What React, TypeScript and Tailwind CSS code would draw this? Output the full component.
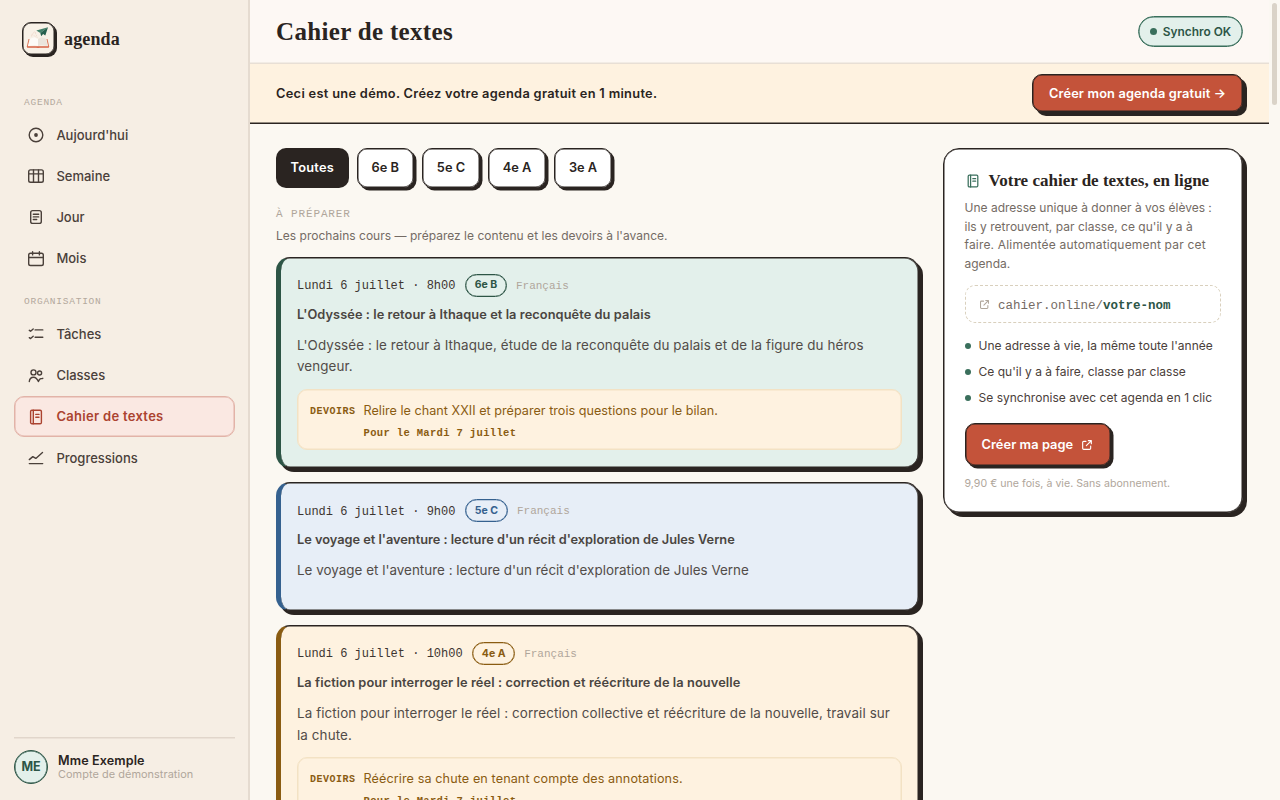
import type { ReactNode } from "react";

const SANS = "font-['Inter',sans-serif]";
const SERIF = "font-['Liberation_Serif',serif]";
const MONO = "font-['Liberation_Mono',monospace]";

function Icon({ children, className = "size-[18px]" }: { children: ReactNode; className?: string }) {
  return (
    <svg
      viewBox="0 0 18 18"
      className={`shrink-0 ${className}`}
      fill="none"
      stroke="currentColor"
      strokeWidth="1.4"
      strokeLinecap="round"
      strokeLinejoin="round"
    >
      {children}
    </svg>
  );
}

function NotebookIcon({ className }: { className?: string }) {
  return (
    <Icon className={className}>
      <rect x="3.6" y="2.3" width="10.8" height="13.400" rx="1.3" />
      <path d="M6.300 2.300v13.400M8.800 6.400h3.200M8.800 9.200h3.200" />
    </Icon>
  );
}

function ExternalIcon({ className }: { className?: string }) {
  return (
    <Icon className={className}>
      <path d="M7.500 3.500H4A1.500 1.500 0 0 0 2.500 5v9A1.500 1.500 0 0 0 4 15.500h9a1.500 1.500 0 0 0 1.500-1.500v-3.500M11 2.500h4.500V7M15.200 2.800 8 10" strokeWidth="1.700" />
    </Icon>
  );
}

function Logo() {
  return (
    <div className="flex size-[32.5px] items-center justify-center rounded-[9px] border border-[#2a2421] bg-[#f8f1e7] shadow-[inset_0_0_0_0.5px_#2a2421,2px_2px_0_#2a2421]">
      <svg viewBox="0 0 24 24" className="size-6 shrink-0">
        <path d="M3 13 1.200 21h21.600L21 13" stroke="#db7558" strokeWidth="1" fill="none" strokeLinejoin="round" />
        <path d="M12 20 8.500 19l-6.300 1 2.200-7.500 4.100-1.200L12 13Z" fill="#fdfbf7" />
        <path d="m12 20 3.500-1 6.300 1-2.200-7.500-4.100-1.200L12 13Z" fill="#ebe5dc" />
        <path d="M1.200 21h21.600M10.700 21.300h2.600" stroke="#d4593a" strokeWidth="1.100" />
        <path d="M5.500 10.500c-.5-3 2-4.500 5-3.500M6 8.500l5 3M8.500 5.500l3 6" stroke="#e9c6b8" strokeWidth=".5" fill="none" strokeDasharray="1.200 .8" />
        <path d="M22 1.300 10.300 4.400l4 2.600Z" fill="#43806a" />
        <path d="m22 1.300-7.700 5.700.9 3.200 1.900-2.200 2.200 1.500Z" fill="#25604e" />
      </svg>
    </div>
  );
}

function NavItem({ icon, label, active }: { icon: ReactNode; label: string; active?: boolean }) {
  return (
    <div
      className={`flex h-[41.200px] items-center gap-[11.400px] rounded-[10px] border pl-3 text-[13px] whitespace-nowrap ${
        active
          ? "border-[#e2b3a8] bg-[#fae8e2] font-semibold tracking-[0.300px] text-[#ab4330] shadow-[inset_0_0_0_0.5px_#e2b3a8]"
          : "border-transparent font-medium text-[#4a403a]"
      }`}
    >
      {icon}
      <span className="pt-px">{label}</span>
    </div>
  );
}

function NavHeading({ children }: { children: ReactNode }) {
  return <div className={`${MONO} h-3 pl-2.5 text-[9.500px] leading-[14px] tracking-[0.080em] text-[#b3a89c] uppercase`}>{children}</div>;
}

function Sidebar() {
  return (
    <aside className="flex h-full w-[250px] shrink-0 flex-col border-r-2 border-[#e5dbd0] bg-[#f6eee4] pr-[13px] pl-3.5">
      <div className="flex items-center gap-[9.500px] pt-[22px] pl-2">
        <Logo />
        <span className={`${SERIF} pt-px text-[18px] leading-none font-bold tracking-[0.150px] text-[#2a2421]`}>agenda</span>
      </div>
      <nav className="mt-[41.500px]">
        <NavHeading>Agenda</NavHeading>
        <div className="mt-[6.500px]">
          <NavItem label="Aujourd'hui" icon={<Icon><circle cx="9" cy="9" r="6.800" /><circle cx="9" cy="9" r="1.900" fill="currentColor" stroke="none" /></Icon>} />
          <NavItem label="Semaine" icon={<Icon><rect x="1.700" y="2.900" width="14.600" height="12.300" rx="1.800" /><path d="M1.700 6.900h14.600M6.500 2.900v12.300M11.500 2.900v12.300" /></Icon>} />
          <NavItem label="Jour" icon={<Icon><rect x="3.700" y="2.600" width="10.600" height="12.800" rx="2" /><path d="M6.300 6.300h5.400M6.300 8.900h5.400M6.300 11.500h3.400" /></Icon>} />
          <NavItem label="Mois" icon={<Icon><rect x="1.700" y="3.300" width="14.600" height="12.200" rx="1.800" /><path d="M1.700 7.500h14.600M5.600 1.700v3.200M12.400 1.700v3.200" /></Icon>} />
        </div>
        <div className="mt-4"><NavHeading>Organisation</NavHeading></div>
        <div className="mt-[6.500px]">
          <NavItem label="Tâches" icon={<Icon><path d="M8.100 4.900h7.700M8.100 12.300h7.700M2.300 5.300l1.300.9 2.600-2.300M2.300 12.700l1.300.9 2.600-2.300" /></Icon>} />
          <NavItem label="Classes" icon={<Icon><circle cx="6.500" cy="5.400" r="2.500" /><circle cx="12.600" cy="6" r="2" /><path d="M2.300 14.500c.3-2.800 2-4.300 4.200-4.300 2.300 0 3.700 1.500 4.900 4.300.6-1.600 1.200-2.600 2.100-2.800.7-.2 1.300 0 2.300-.4" /></Icon>} />
          <NavItem active label="Cahier de textes" icon={<NotebookIcon />} />
          <NavItem label="Progressions" icon={<Icon><path d="m2.300 10.600 3.500-3 3 1.800L15.500 3.400M2.300 14.600h13.400" /></Icon>} />
        </div>
      </nav>
      <div className="mt-auto flex h-[63.500px] items-start gap-[10px] border-t border-[#e1d6cb] pt-3 shadow-[inset_0_0.5px_0_#e1d6cb]">
        <div className="flex size-[34px] items-center justify-center rounded-full border border-[#2d5546] bg-[#e3f0eb] text-[12.500px] font-bold text-[#2d5546] shadow-[inset_0_0_0_0.5px_#2d5546]">
          <span className="pt-px">ME</span>
        </div>
        <div className="pt-[3px] whitespace-nowrap">
          <div className="text-[12.600px] leading-[15px] font-semibold tracking-[0.100px] text-[#2a2421]">Mme Exemple</div>
          <div className="text-[10.900px] leading-[13px] tracking-[0.060px] text-[#b0a69b]">Compte de démonstration</div>
        </div>
      </div>
    </aside>
  );
}

const chips = [
  { label: "6e B", width: "w-[57.500px]" },
  { label: "5e C", width: "w-[58px]" },
  { label: "4e A", width: "w-[58px]" },
  { label: "3e A", width: "w-[58px]" },
];

interface Lesson {
  time: string;
  group: string;
  title: string;
  titleClass: string;
  body: [string, string?];
  bodyClass: string;
  homework?: string;
  homeworkClass?: string;
  card: string;
  pill: string;
}

const lessons: Lesson[] = [
  {
    time: "8h00",
    group: "6e B",
    title: "L'Odyssée : le retour à Ithaque et la reconquête du palais",
    titleClass: "tracking-[0.070px]",
    body: ["L'Odyssée : le retour à Ithaque, étude de la reconquête du palais et de la figure du héros", "vengeur."],
    bodyClass: "tracking-[0.100px]",
    homework: "Relire le chant XXII et préparer trois questions pour le bilan.",
    homeworkClass: "tracking-[0.030px]",
    card: "h-[211px] bg-[#e3f0eb] border-l-[#2d5546]",
    pill: "border-[#2d5546] text-[#2d5546] w-[42px] shadow-[inset_0_0_0_0.3px_#2d5546]",
  },
  {
    time: "9h00",
    group: "5e C",
    title: "Le voyage et l'aventure : lecture d'un récit d'exploration de Jules Verne",
    titleClass: "tracking-[-0.020px]",
    body: ["Le voyage et l'aventure : lecture d'un récit d'exploration de Jules Verne"],
    bodyClass: "tracking-[0.020px]",
    card: "h-[128.500px] bg-[#e7eef7] border-l-[#35618f]",
    pill: "border-[#35618f] text-[#35618f] w-[43px] shadow-[inset_0_0_0_0.3px_#35618f]",
  },
  {
    time: "10h00",
    group: "4e A",
    title: "La fiction pour interroger le réel : correction et réécriture de la nouvelle",
    titleClass: "tracking-[0.090px]",
    body: ["La fiction pour interroger le réel : correction collective et réécriture de la nouvelle, travail sur", "la chute."],
    bodyClass: "tracking-[0.110px]",
    homework: "Réécrire sa chute en tenant compte des annotations.",
    homeworkClass: "tracking-[0.110px]",
    card: "h-[211px] bg-[#fef2e0] border-l-[#8a5c12]",
    pill: "border-[#8a5c12] text-[#8a5c12] w-[43px] shadow-[inset_0_0_0_0.3px_#8a5c12]",
  },
];

function LessonCard({ lesson }: { lesson: Lesson }) {
  return (
    <article className={`shrink-0 rounded-[14px] border border-l-[5px] border-[#2a2421] px-4 pt-4 whitespace-nowrap shadow-[inset_-0.5px_0.5px_0_#2a2421,inset_0_-0.5px_0_#2a2421,4px_4px_0_#2a2421] ${lesson.card}`}>
      <div className="flex h-[23px] items-center">
        <span className={`${MONO} pt-[2px] text-[12px] text-[#3d3531]`}>Lundi 6 juillet · {lesson.time}</span>
        <span className={`ml-[9.500px] flex h-[23px] items-center justify-center rounded-full border text-[10.500px] font-bold ${lesson.pill}`}>{lesson.group}</span>
        <span className={`${MONO} ml-[9px] pt-[2px] text-[11px] text-[#b0a69b]`}>Français</span>
      </div>
      <div className={`mt-[8px] text-[12.800px] leading-[20px] font-semibold text-[#4a4541] ${lesson.titleClass}`}>{lesson.title}</div>
      <div className={`mt-[10px] text-[13.400px] leading-[21.700px] text-[#524c48] ${lesson.bodyClass}`}>
        {lesson.body[0]}
        {lesson.body[1] && <><br />{lesson.body[1]}</>}
      </div>
      {lesson.homework && (
        <div className="mt-[11px] flex h-[61px] rounded-[10px] border border-[#f3e2c4] bg-[#fef2e0] pt-[11px] pl-3 text-[#8a5c12] shadow-[inset_0_0_0_0.5px_#f3e2c4]">
          <span className={`${MONO} w-[53.500px] pt-px text-[10px] leading-[20px] font-bold tracking-[0.050em]`}>DEVOIRS</span>
          <div>
            <div className={`text-[12.600px] leading-[20px] ${lesson.homeworkClass}`}>{lesson.homework}</div>
            <div className={`${MONO} mt-[4px] text-[10.500px] leading-[16px] font-bold tracking-[0.033em]`}>Pour le Mardi 7 juillet</div>
          </div>
        </div>
      )}
    </article>
  );
}

function Promo() {
  return (
    <aside className="h-[364.500px] w-[300px] shrink-0 rounded-[16px] border border-[#2a2421] bg-white pt-[20px] pr-[21.500px] pl-[20.500px] whitespace-nowrap shadow-[inset_0_0_0_0.5px_#2a2421,4px_4px_0_#2a2421]">
      <div className="flex h-6 items-center gap-2">
        <NotebookIcon className="size-4 text-[#3a6f5c]" />
        <h2 className={`${SERIF} text-[17px] font-bold text-[#2a2421]`}>Votre cahier de textes, en ligne</h2>
      </div>
      <p className="mt-[6px] text-[12px] leading-[18.600px] text-[#746b64]">
        Une adresse unique à donner à vos élèves :<br />
        <span className="tracking-[0.020px]">ils y retrouvent, par classe, ce qu'il y a à</span><br />
        <span className="tracking-[0.180px]">faire. Alimentée automatiquement par cet</span><br />
        agenda.
      </p>
      <div className={`${MONO} mt-[12px] flex h-[38px] items-center rounded-[10px] border border-dashed border-[#d9d0bd] pl-[13px] text-[12.500px] text-[#746b64]`}>
        <ExternalIcon className="mr-[8.500px] size-[11px] text-[#b0a69b]" />
        <span className="pt-[3px]">cahier.online/</span>
        <strong className="pt-[3px] text-[#2d5546]">votre-nom</strong>
      </div>
      <ul className="mt-[10px] text-[12px] tracking-[0.020px] text-[#4a403a]">
        {["Une adresse à vie, la même toute l'année", "Ce qu'il y a à faire, classe par classe", "Se synchronise avec cet agenda en 1 clic"].map((item) => (
          <li key={item} className="flex h-[26px] items-center gap-2">
            <span className="size-1.5 rounded-full bg-[#3a6f5c]" />
            {item}
          </li>
        ))}
      </ul>
      <button className="mt-3 flex h-[42.500px] w-[146px] items-center rounded-[10px] border border-[#2a2421] bg-[#c4533a] pl-4 text-[12.800px] font-semibold tracking-[0.070px] text-white shadow-[inset_0_0_0_0.5px_#2a2421,2.5px_2.5px_0_#2a2421]">
        <span>Créer ma page</span>
        <ExternalIcon className="ml-2 size-3" />
      </button>
      <div className="mt-[9px] text-[10.600px] leading-[18px] tracking-[0.030px] text-[#b0a69b]">9,90 € une fois, à vie. Sans abonnement.</div>
    </aside>
  );
}

export default function App() {
  return (
    <div className={`${SANS} relative flex h-[800px] w-[1280px] overflow-hidden bg-[#fbf8f2]`}>
      <Sidebar />
      <div className="flex min-w-0 flex-1 flex-col">
        <header className="flex h-16 w-[1019px] shrink-0 items-center justify-between border-b border-[#e8dfd5] bg-[#fdf8f4] px-[26px] shadow-[inset_0_-0.5px_0_#e8dfd5]">
          <h1 className={`${SERIF} pt-px text-[25px] font-bold tracking-[0.330px] text-[#2a2421]`}>Cahier de textes</h1>
          <div className="flex h-[31px] w-[105px] items-center justify-center gap-[6px] rounded-full border border-[#3a6f5c] bg-[#e3f0eb] text-[11.900px] font-semibold whitespace-nowrap text-[#2d5546] shadow-[inset_0_0_0_0.5px_#3a6f5c]">
            <span className="size-[7px] rounded-full bg-[#3a6f5c]" />
            Synchro OK
          </div>
        </header>
        <section className="flex h-[60px] w-[1019px] shrink-0 items-center justify-between border-b border-[#2a2421] bg-[#fef2e0] px-[26px] whitespace-nowrap shadow-[inset_0_-0.5px_0_#2a2421]">
          <p className="text-[12.800px] font-semibold tracking-[0.310px] text-[#2a2421]">Ceci est une démo. Créez votre agenda gratuit en 1 minute.</p>
          <button className="mb-px flex h-[38px] w-[211px] items-center justify-center rounded-[10px] border border-[#2a2421] bg-[#c4533a] text-[12.800px] font-semibold tracking-[0.150px] text-white shadow-[inset_0_0_0_0.5px_#2a2421,4px_4px_0_#2a2421]">
            <span className="pt-px">Créer mon agenda gratuit →</span>
          </button>
        </section>
        <main className="flex min-h-0 flex-1 gap-6 overflow-hidden pt-6 pl-[26px]">
          <div className="flex w-[643px] shrink-0 flex-col">
            <div className="flex h-[39.500px] shrink-0 gap-2">
              <div className="flex w-[72.500px] items-center justify-center rounded-[10px] bg-[#2a2421] text-[12.800px] font-semibold tracking-[0.200px] text-white">Toutes</div>
              {chips.map((chip) => (
                <div key={chip.label} className={`flex items-center justify-center rounded-[10px] border border-[#2a2421] bg-white text-[12.800px] font-semibold text-[#2a2421] shadow-[inset_0_0_0_0.5px_#2a2421,2.5px_2.5px_0_#2a2421] ${chip.width}`}>
                  {chip.label}
                </div>
              ))}
            </div>
            <div className={`${MONO} mt-[17.400px] text-[11px] leading-[18px] tracking-[0.080em] text-[#b0a69b]`}>À PRÉPARER</div>
            <div className="mt-[4px] text-[12px] leading-[18px] tracking-[0.020px] text-[#746b64]">Les prochains cours — préparez le contenu et les devoirs à l'avance.</div>
            <div className="mt-[11.900px] flex flex-col gap-[14.300px]">
              {lessons.map((lesson) => (
                <LessonCard key={lesson.time} lesson={lesson} />
              ))}
            </div>
          </div>
          <Promo />
        </main>
      </div>
      <div className="absolute top-[3px] left-[1272px] h-[102px] w-[5px] rounded-full bg-[#dad3c8]" />
    </div>
  );
}
